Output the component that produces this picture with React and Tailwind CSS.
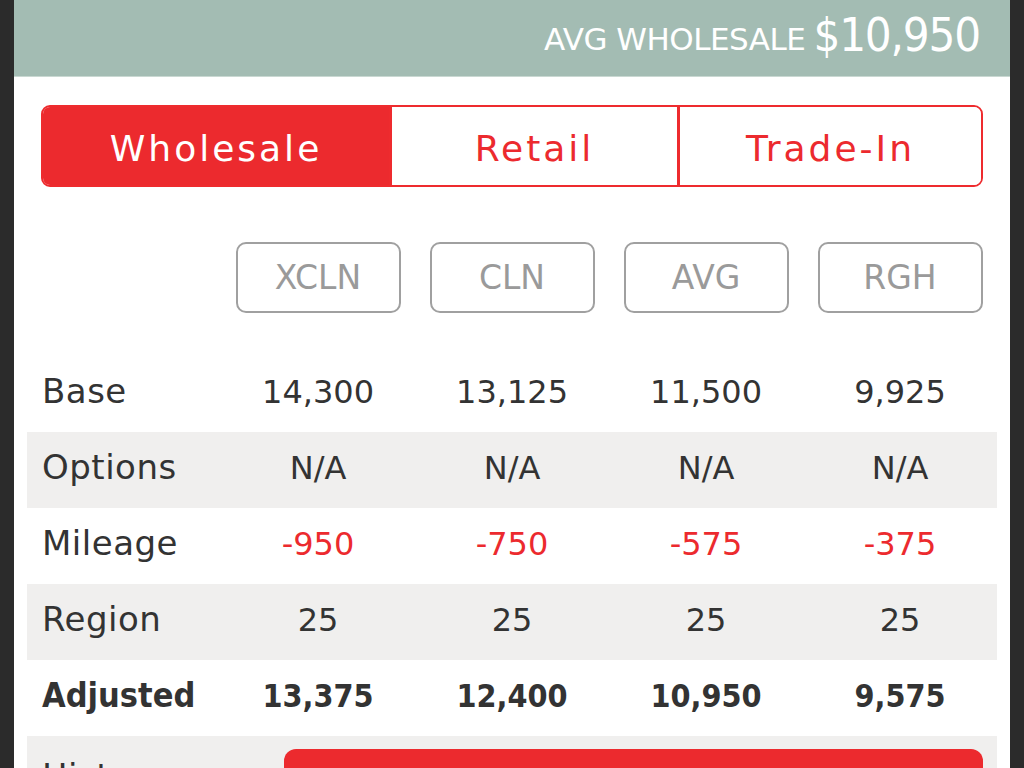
import React from "react";

const font = { fontFamily: '"DejaVu Sans", "Noto Sans", sans-serif' };

const conditions = ["XCLN", "CLN", "AVG", "RGH"];

const rows = [
  { label: "Base", values: ["14,300", "13,125", "11,500", "9,925"] },
  { label: "Options", values: ["N/A", "N/A", "N/A", "N/A"], shaded: true },
  { label: "Mileage", values: ["-950", "-750", "-575", "-375"], negative: true },
  { label: "Region", values: ["25", "25", "25", "25"], shaded: true },
  { label: "Adjusted", values: ["13,375", "12,400", "10,950", "9,575"], bold: true },
];

const tabs = [
  { name: "Wholesale", width: "w-[346px]", active: true },
  { name: "Retail", width: "w-[288px]" },
  { name: "Trade-In", width: "flex-1" },
];

export default function App() {
  return (
    <div className="h-[768px] overflow-hidden bg-[#2b2b2b] px-[14px]" style={font}>
      <div className="h-full bg-white">
        {/* Header */}
        <div className="flex h-[77px] items-center justify-end border-b border-[#c9d8d2] bg-[#a3bcb3] pr-[30px] pb-[6px] text-white">
          <span className="mt-[8px] text-[31px] tracking-[-0.5px]">AVG WHOLESALE</span>
          <span className="ml-[8px] text-[47px] tracking-tight [font-stretch:condensed]">$10,950</span>
        </div>

        {/* Tabs */}
        <div className="mx-[27px] mt-[28px] flex h-[82px] overflow-hidden rounded-[9px] border-2 border-[#ee2b2e]">
          {tabs.map((tab, i) => (
            <div
              key={tab.name}
              className={`${tab.width} flex items-center justify-center pt-[5px] text-[36px] tracking-[3px] ${
                tab.active ? "bg-[#ec2a2e] text-white" : "bg-white text-[#ec2a2e]"
              } ${i > 0 ? "border-l-[3px] border-[#ee2b2e]" : ""}`}
            >
              {tab.name}
            </div>
          ))}
        </div>

        {/* Condition chips */}
        <div className="mx-[13px] mt-[55px] grid grid-cols-5">
          <div />
          {conditions.map((c) => (
            <div key={c} className="flex justify-center">
              <div className="flex h-[71px] w-[165px] items-center justify-center rounded-[10px] border-2 border-[#a0a0a0] text-[33px] text-[#9a9a9a]">
                {c}
              </div>
            </div>
          ))}
        </div>

        {/* Value table */}
        <div className="mx-[13px] mt-[43px]">
          {rows.map((row) => (
            <div
              key={row.label}
              className={`grid h-[76px] grid-cols-5 items-center pb-[5px] text-[32px] text-[#333333] ${
                row.shaded ? "bg-[#f0efee]" : "bg-white"
              } ${row.bold ? "font-bold [font-stretch:condensed]" : ""}`}
            >
              <div className={`pl-[15px] ${row.bold ? "text-[34px]" : "text-[34px] tracking-[0.5px]"}`}>
                {row.label}
              </div>
              {row.values.map((v, i) => (
                <div key={i} className={`text-center ${row.negative ? "text-[#ec2a2e]" : ""}`}>
                  {v}
                </div>
              ))}
            </div>
          ))}
          <div className="flex h-[120px] bg-[#f0efee] pt-[13px]">
            <div className="w-[257px] pl-[15px] pt-[2px] text-[34px] tracking-[0.5px] text-[#333333]">History</div>
            <div className="mr-[14px] h-[90px] flex-1 rounded-[12px] bg-[#ec2a2e]" />
          </div>
        </div>
      </div>
    </div>
  );
}
